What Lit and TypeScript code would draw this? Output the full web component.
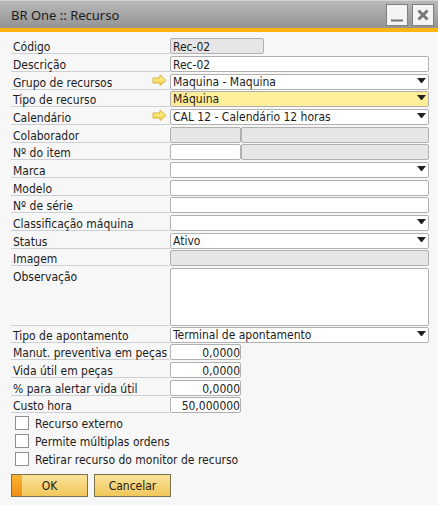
import { LitElement, html, css, nothing } from "lit";
import { customElement } from "lit/decorators.js";
import { classMap } from "lit/directives/class-map.js";

type Kind = "text" | "select" | "pair" | "area" | "number";

interface Field {
  id: string;
  label: string;
  kind: Kind;
  value?: string;
  disabled?: boolean;
  short?: boolean;
  active?: boolean;
  link?: boolean;
}

const FIELDS: Field[] = [
  { id: "codigo", label: "Código", kind: "text", value: "Rec-02", disabled: true, short: true },
  { id: "descricao", label: "Descrição", kind: "text", value: "Rec-02" },
  { id: "grupo", label: "Grupo de recursos", kind: "select", value: "Maquina - Maquina", link: true },
  { id: "tipo", label: "Tipo de recurso", kind: "select", value: "Máquina", active: true },
  { id: "calendario", label: "Calendário", kind: "select", value: "CAL 12 - Calendário 12 horas", link: true },
  { id: "colaborador", label: "Colaborador", kind: "pair", disabled: true },
  { id: "item", label: "Nº do item", kind: "pair" },
  { id: "marca", label: "Marca", kind: "select" },
  { id: "modelo", label: "Modelo", kind: "text" },
  { id: "serie", label: "Nº de série", kind: "text" },
  { id: "classificacao", label: "Classificação máquina", kind: "select" },
  { id: "status", label: "Status", kind: "select", value: "Ativo" },
  { id: "imagem", label: "Imagem", kind: "text", disabled: true },
  { id: "observacao", label: "Observação", kind: "area" },
  { id: "apontamento", label: "Tipo de apontamento", kind: "select", value: "Terminal de apontamento" },
  { id: "manut", label: "Manut. preventiva em peças", kind: "number", value: "0,0000" },
  { id: "vida", label: "Vida útil em peças", kind: "number", value: "0,0000" },
  { id: "alerta", label: "% para alertar vida útil", kind: "number", value: "0,0000" },
  { id: "custo", label: "Custo hora", kind: "number", value: "50,000000" },
];

const CHECKS = [
  { id: "externo", label: "Recurso externo" },
  { id: "multiplas", label: "Permite múltiplas ordens" },
  { id: "retirar", label: "Retirar recurso do monitor de recurso" },
];

const arrowIcon = html`<svg class="arrow" viewBox="0 0 15 12" aria-hidden="true">
  <defs>
    <linearGradient id="gold" x1="0" y1="0" x2="0" y2="1">
      <stop offset="0" stop-color="#fff9a0" />
      <stop offset="1" stop-color="#f3cf3c" />
    </linearGradient>
  </defs>
  <path d="M1 4H8V1L14 6.5L8 11.5V9H1Z" fill="url(#gold)" stroke="#d8b040" stroke-linejoin="round" />
</svg>`;

@customElement("app-root")
export class AppRoot extends LitElement {
  static styles = css`
    :host {
      display: block;
      min-height: 100vh;
      box-sizing: border-box;
      background: #f7f7f7;
      font: 12px/14px "DejaVu Sans Condensed", Tahoma, sans-serif;
      color: #1c1c1c;
    }
    * {
      box-sizing: border-box;
    }
    header {
      display: flex;
      align-items: center;
      gap: 4px;
      height: 32px;
      padding: 0 4px 0 11px;
      border-top: 1px solid #d4d4d4;
      border-bottom: 4px solid #ffb50f;
      background: linear-gradient(#b8b8b8, #949494);
    }
    h1 {
      flex: 1;
      margin: 0;
      font: 400 13px/18px "Noto Sans", sans-serif;
    }
    .win {
      width: 22px;
      height: 22px;
      padding: 0;
      border: 1px solid #808080;
      background: #f4f4f4;
    }
    .win svg {
      display: block;
      width: 20px;
      height: 20px;
    }
    form {
      padding: 6px 9px 8px 11px;
    }
    .row {
      display: grid;
      grid-template-columns: 159px 1fr;
      grid-template-rows: 16px;
      height: 18px;
    }
    .row:nth-child(3n) {
      height: 17px;
    }
    .row.tall {
      grid-template-rows: 58px;
      height: 59px;
    }
    .name {
      display: flex;
      justify-content: space-between;
      padding: 0 3px 0 2px;
      border-bottom: 1px solid #ccd0d4;
    }
    .name label {
      line-height: 18px;
      white-space: nowrap;
    }
    .link {
      width: 15px;
      height: 12px;
      padding: 0;
      border: 0;
      background: none;
    }
    .arrow {
      display: block;
      width: 15px;
      height: 12px;
    }
    .cell {
      position: relative;
      display: flex;
      min-width: 0;
    }
    .box {
      flex: 1;
      min-width: 0;
      height: 100%;
      margin: 0;
      padding: 0 2px;
      border: 1px solid #b0b0b0;
      border-radius: 2px;
      outline: 0;
      background: #fff;
      color: inherit;
      font: inherit;
      appearance: none;
      resize: none;
    }
    .box:disabled {
      background: #e6e6e6;
      opacity: 1;
    }
    .box.active {
      background: #ffee99;
    }
    .box.short {
      flex: 0 0 94px;
    }
    .box.code {
      flex: 0 0 71px;
    }
    .box.number {
      flex: 0 0 71px;
      padding: 2px 0 0;
      text-align: right;
    }
    input.box {
      padding-top: 2px;
    }
    .caret {
      position: absolute;
      top: 4px;
      right: 3px;
      width: 9px;
      height: 6px;
      pointer-events: none;
    }
    .check {
      display: flex;
      gap: 6px;
      height: 18px;
      padding: 1px 0 0 4px;
      line-height: 16px;
    }
    .check input {
      width: 14px;
      height: 14px;
      margin: 0;
      border: 1px solid #8e8f8f;
      background: #fff;
      appearance: none;
    }
    .check input:checked {
      background: #ffb50f;
    }
    .actions {
      display: flex;
      gap: 6px;
      padding-top: 5px;
    }
    .btn {
      width: 77px;
      height: 23px;
      padding: 0;
      border: 1px solid #7d7250;
      background: linear-gradient(#fbe39a, #f0c75a);
      color: inherit;
      font: inherit;
    }
    .btn.main {
      background:
        linear-gradient(#f9b233, #ee8f14) left / 10px 100% no-repeat,
        linear-gradient(#fbe39a, #f0c75a);
    }
  `;

  private control(f: Field) {
    switch (f.kind) {
      case "select":
        return html`<select id=${f.id} class=${classMap({ box: true, active: !!f.active })}>
            <option>${f.value ?? ""}</option>
          </select>
          <svg class="caret" viewBox="0 0 9 6" aria-hidden="true"><path d="M0 0H9L5 5H4Z" fill="#222" /></svg>`;
      case "pair":
        return html`<input id=${f.id} class="box code" ?disabled=${f.disabled} /><input
            class="box"
            aria-label="${f.label} (nome)"
            disabled
          />`;
      case "area":
        return html`<textarea id=${f.id} class="box"></textarea>`;
      default:
        return html`<input
          id=${f.id}
          class=${classMap({ box: true, short: !!f.short, number: f.kind === "number" })}
          .value=${f.value ?? ""}
          ?disabled=${f.disabled}
        />`;
    }
  }

  render() {
    return html`
      <header>
        <h1>BR One :: Recurso</h1>
        <button class="win" aria-label="Minimizar">
          <svg viewBox="0 0 20 20"><path d="M4 15.5H16" stroke="#777" stroke-width="2" /></svg>
        </button>
        <button class="win" aria-label="Fechar">
          <svg viewBox="0 0 20 20">
            <path d="M5.5 5.5L14.5 14.5M14.5 5.5L5.5 14.5" stroke="#777" stroke-width="3" />
          </svg>
        </button>
      </header>
      <form @submit=${(e: Event) => e.preventDefault()}>
        <div>
          ${FIELDS.map(
            (f) => html`<div class=${classMap({ row: true, tall: f.kind === "area" })}>
              <div class="name">
                <label for=${f.id}>${f.label}</label>
                ${f.link
                  ? html`<button type="button" class="link" aria-label="Abrir ${f.label}">${arrowIcon}</button>`
                  : nothing}
              </div>
              <div class="cell">${this.control(f)}</div>
            </div>`
          )}
        </div>
        ${CHECKS.map(
          (c) => html`<div class="check">
            <input type="checkbox" id=${c.id} /><label for=${c.id}>${c.label}</label>
          </div>`
        )}
        <div class="actions">
          <button class="btn main">OK</button>
          <button type="button" class="btn">Cancelar</button>
        </div>
      </form>
    `;
  }
}
